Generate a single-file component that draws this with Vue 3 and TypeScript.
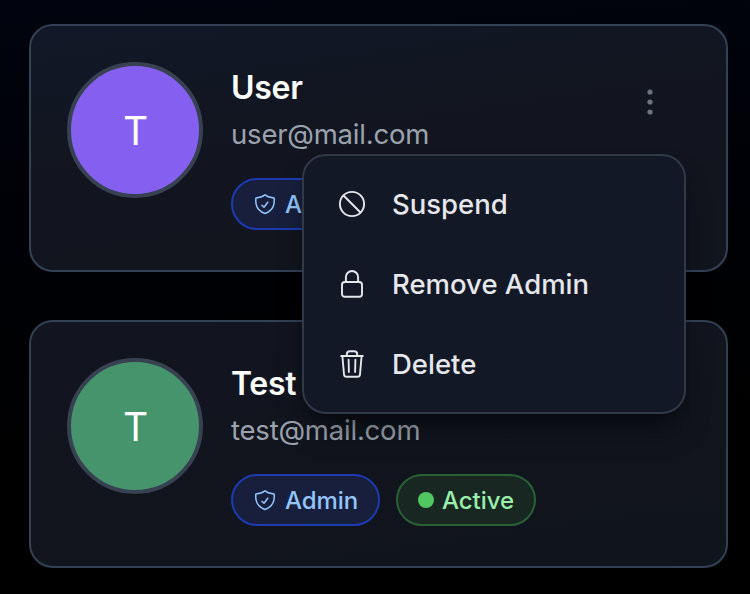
<script setup lang="ts">
import { ref } from 'vue'

interface Account {
  name: string
  email: string
  tone: 'violet' | 'green'
  status?: string
}

interface MenuAction {
  label: string
  icon: 'ban' | 'lock' | 'trash'
}

const accounts: Account[] = [
  { name: 'User', email: 'user@mail.com', tone: 'violet' },
  { name: 'Test', email: 'test@mail.com', tone: 'green', status: 'Active' },
]

const actions: MenuAction[] = [
  { label: 'Suspend', icon: 'ban' },
  { label: 'Remove Admin', icon: 'lock' },
  { label: 'Delete', icon: 'trash' },
]

const openIndex = ref(0)
</script>

<template>
  <main class="page">
    <article v-for="(account, i) in accounts" :key="account.email" class="card">
      <div class="avatar" :class="account.tone">T</div>
      <div class="info">
        <h2 class="name">{{ account.name }}</h2>
        <p class="email">{{ account.email }}</p>
        <div class="badges">
          <span class="badge admin">
            <svg class="shield" viewBox="0 0 24 24">
              <path d="M12 2.8C9.8 4.7 6.6 5.8 2.9 5.9C2.7 7.8 2.7 10 3.1 12.1C4 16.6 7.3 19.8 12 21.5C16.7 19.8 20 16.6 20.9 12.1C21.3 10 21.3 7.8 21.1 5.9C17.4 5.8 14.2 4.7 12 2.8Z" />
              <path d="M8.9 13.2L11 15.3L14.8 10.2" />
            </svg>
            <span>Admin</span>
          </span>
          <span v-if="account.status" class="badge active">
            <i class="dot"></i><span>{{ account.status }}</span>
          </span>
        </div>
      </div>
      <button v-if="openIndex === i" class="more" type="button">
        <svg width="6" height="26" viewBox="0 0 6 26">
          <circle cx="3" cy="3" r="2.6" />
          <circle cx="3" cy="13" r="2.6" />
          <circle cx="3" cy="23" r="2.6" />
        </svg>
      </button>
      <div v-if="openIndex === i" class="menu">
        <button v-for="action in actions" :key="action.label" class="item" type="button">
          <svg class="icon" viewBox="0 0 28 28">
            <template v-if="action.icon === 'ban'">
              <circle cx="14" cy="14" r="12.1" />
              <path d="M5.5 5.5L22.5 22.5" />
            </template>
            <template v-else-if="action.icon === 'lock'">
              <rect x="4" y="12" width="20" height="14.8" rx="2.8" />
              <path d="M7.9 12V7.1A6.1 6.1 0 0 1 20.1 7.1V12" />
            </template>
            <template v-else>
              <path d="M3.2 6H24.8M4.4 6L6 24.4Q6.2 26.8 8.6 26.8H19.4Q21.8 26.8 22 24.4L23.6 6" />
              <path d="M8.8 6V4.4Q8.8 1.2 12 1.2H16Q19.2 1.2 19.2 4.4V6M10.6 9.8L10.9 22M17.4 9.8L17.1 22" />
            </template>
          </svg>
          <span>{{ action.label }}</span>
        </button>
      </div>
    </article>
  </main>
</template>

<style>
body {
  margin: 0;
  background: #000;
}
</style>

<style scoped>
.page {
  box-sizing: border-box;
  height: 594px;
  padding: 24px 22px 0 29px;
  display: flex;
  flex-direction: column;
  gap: 48px;
  overflow: hidden;
  background: linear-gradient(176deg, #01040e 0%, #000106 35%, #000 75%);
  font-family: Inter, 'Liberation Sans', sans-serif;
}

.card {
  position: relative;
  box-sizing: border-box;
  height: 248px;
  flex: none;
  display: flex;
  align-items: flex-start;
  gap: 28px;
  padding: 36px;
  border: 2px solid #334155;
  border-radius: 24px;
  background: linear-gradient(172deg, #111827 0%, #12151f 50%, #11151d 100%);
}

.card + .card {
  background: linear-gradient(172deg, #12151f 0%, #10141c 100%);
}

.avatar {
  box-sizing: border-box;
  width: 136px;
  height: 136px;
  flex: none;
  display: flex;
  align-items: center;
  justify-content: center;
  padding-left: 1px;
  border: 4px solid #374151;
  border-radius: 50%;
  color: #fff;
  font-size: 39px;
}

.violet { background: #8560f0; }
.green { background: #45946c; }

.info { flex: 1; }

.name {
  margin: 0;
  color: #fff;
  font-size: 32px;
  font-weight: 600;
  line-height: 52px;
  letter-spacing: -0.3px;
}

.email {
  margin: 0;
  color: #9ca3af;
  font-size: 27.5px;
  line-height: 40px;
  letter-spacing: -0.2px;
}

.badges {
  display: flex;
  gap: 16px;
  margin-top: 24px;
}

.badge {
  box-sizing: border-box;
  height: 52px;
  display: flex;
  align-items: center;
  gap: 8px;
  padding: 1px 0 0 20px;
  border: 2px solid;
  border-radius: 26px;
  font-size: 24px;
  font-weight: 500;
  letter-spacing: -0.05px;
}

.admin {
  width: 149px;
  border-color: #1e3ab0;
  background: #171f3c;
  color: #93c5fd;
}

.active {
  width: 140px;
  border-color: #286036;
  background: #192722;
  color: #9aeeac;
}

.shield {
  width: 24px;
  height: 24px;
  margin-top: -1px;
  fill: none;
  stroke: currentColor;
  stroke-width: 1.5;
  stroke-linecap: round;
  stroke-linejoin: round;
}

.dot {
  width: 16px;
  height: 16px;
  margin-top: -1px;
  border-radius: 50%;
  background: #51c75f;
}

.more {
  display: flex;
  padding: 0;
  margin: 27px 37px 0 0;
  border: 0;
  background: none;
}

.more svg { fill: #6b7280; }

.menu {
  position: absolute;
  z-index: 2;
  top: 128px;
  right: 40px;
  box-sizing: border-box;
  width: 384px;
  padding: 8px 0;
  border: 2px solid #303947;
  border-radius: 24px;
  background: #131827;
  box-shadow: 0 20px 30px -6px rgba(0, 0, 0, 0.4), 0 8px 12px -8px rgba(0, 0, 0, 0.4);
}

.item {
  width: 100%;
  height: 80px;
  display: flex;
  align-items: center;
  gap: 26px;
  padding: 0 34px;
  border: 0;
  background: none;
  color: #e5e7eb;
  font: 500 27.5px Inter, 'Liberation Sans', sans-serif;
}

.item span { padding-bottom: 1px; }

.icon {
  width: 28px;
  height: 28px;
  fill: none;
  stroke: currentColor;
  stroke-width: 1.9;
  stroke-linecap: round;
  stroke-linejoin: round;
}
</style>
